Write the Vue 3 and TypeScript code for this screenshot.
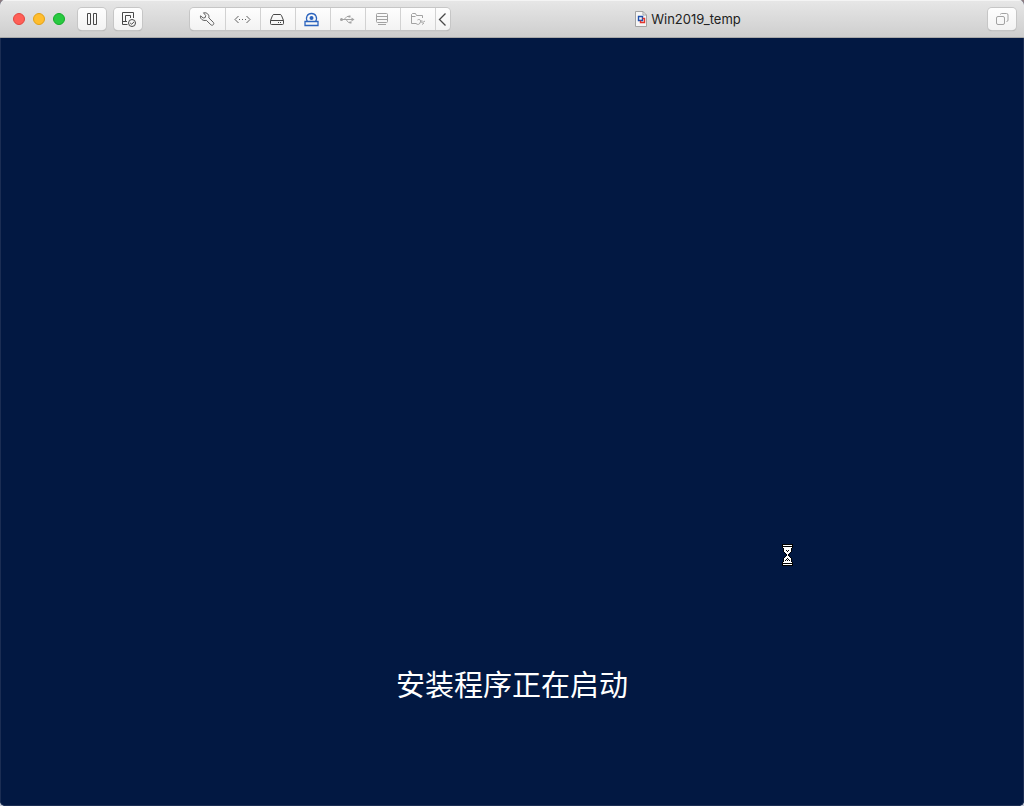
<script setup lang="ts">
import { ref } from 'vue'

type Device = { id: string; label: string; tone: 'dark' | 'mid' | 'blue' | 'dim' }

const devices: Device[] = [
  { id: 'settings', label: '设置', tone: 'mid' },
  { id: 'network', label: '网络适配器', tone: 'mid' },
  { id: 'disk', label: '硬盘', tone: 'dark' },
  { id: 'cd', label: 'CD/DVD', tone: 'blue' },
  { id: 'usb', label: 'USB', tone: 'dim' },
  { id: 'printer', label: '打印机', tone: 'dim' },
  { id: 'share', label: '共享文件夹', tone: 'dim' },
]

const title = ref('Win2019_temp')
const message = ref('安装程序正在启动')
</script>

<template>
  <div class="window">
    <header class="titlebar">
      <div class="lights">
        <button class="light close" aria-label="关闭"></button>
        <button class="light minimize" aria-label="最小化"></button>
        <button class="light zoom" aria-label="缩放"></button>
      </div>

      <button class="tool dark" aria-label="暂停">
        <svg width="28" height="23" viewBox="0 0 28 23">
          <path d="M9.5 5.5h3v11h-3zM15.5 5.5h3v11h-3z" />
        </svg>
      </button>
      <button class="tool dark" aria-label="快照">
        <svg width="28" height="23" viewBox="0 0 28 23">
          <path d="M19.5 10V4.5h-11v12h5M16.500 10V7.500h-5v6M8.500 13.500h4.500" />
          <circle cx="18" cy="15" r="3.500" />
          <path d="M16.200 15l1.500 1.200 2.300-2.300" />
        </svg>
      </button>

      <nav class="devices">
        <button v-for="d in devices" :key="d.id" class="device" :class="d.tone" :aria-label="d.label">
          <svg width="35" height="23" viewBox="0 0 35 23">
            <path
              v-if="d.id === 'settings'"
              d="M13.500 4.800C17 4.200 19.600 6.800 18.800 9.900L23.300 14.300C24.800 16 22.600 18.200 20.900 16.800L16.300 12.300C13 13.200 9.800 10.800 10.500 7.800L13.200 10 15.200 9.600 15.700 7.500Z"
            />
            <g v-else-if="d.id === 'network'">
              <path d="M13.500 8L10 11.500l3.500 3.500M21.500 8l3.500 3.500-3.500 3.500" />
              <path class="fill" d="M14 11h1v1h-1zM17 11h1v1h-1zM20 11h1v1h-1z" />
            </g>
            <g v-else-if="d.id === 'disk'">
              <path d="M10.500 12.500L12.500 7.500Q12.900 6.500 14 6.500h6q1.100 0 1.500 1l2 5v3q0 1-1 1h-11q-1 0-1-1zM10.500 12.500h13" />
              <path class="fill" d="M18 14h1v1h-1zM20 14h1v1h-1z" />
            </g>
            <g v-else-if="d.id === 'cd'">
              <path
                class="medium"
                d="M12.500 13.500C10 9.500 12.500 5.500 16.500 5.500S23 9.500 20.500 13.500M10 13.500h13v4h-13z"
              />
              <circle class="fill" cx="16.500" cy="10" r="2" />
            </g>
            <g v-else-if="d.id === 'usb'">
              <path d="M12 11.500h10M14 11.500l3-3h2M16 11.500l2.500 3h1.500" />
              <path class="fill" d="M21.500 9.500v4l3-2zM18.500 7.500h2v2h-2zM19.500 13.500h2v2h-2z" />
              <circle class="fill" cx="11.500" cy="11.500" r="1.500" />
            </g>
            <path
              v-else-if="d.id === 'printer'"
              d="M12.500 5.500h9q1 0 1 1v7q0 1-1 1h-9q-1 0-1-1v-7q0-1 1-1zM11.500 8.500h11M11.500 11.500h11M13 16.500h8"
            />
            <g v-else>
              <path d="M16 15.500h-4.500v-9l1-1h3l1 2h6v2.500M11.500 8.500h4" />
              <path d="M16 15.500c1.500 1.500 3.500 1 4-0.500s1-2.500 2.500-2M17.500 12c1.500-1 3-0.500 3 1s2 2 4.500 0M22 16.500l2-1.500" />
            </g>
          </svg>
        </button>
        <button class="device dark" aria-label="折叠">
          <svg width="15" height="23" viewBox="0 0 15 23">
            <path class="medium" d="M10.500 5.500l-6 6 6 6" />
          </svg>
        </button>
      </nav>

      <h1 class="title">
        <svg width="12" height="16" viewBox="0 0 12 16">
          <path d="M0.500 0.500h7.500l3.500 3.500v11.500H0.500z" fill="#f6f6f6" stroke="#a3a3a3" />
          <path d="M8 0.500V4h3.500" fill="none" stroke="#a3a3a3" />
          <path d="M3.500 5.500h4v4h-4z" fill="none" stroke="#1c4fae" stroke-width="1.400" />
          <path d="M5.500 9.500v2h4v-4h-2" fill="none" stroke="#e2342c" stroke-width="1.400" />
        </svg>
        <span>{{ title }}</span>
      </h1>

      <button class="tool dim" aria-label="窗口">
        <svg width="28" height="23" viewBox="0 0 28 23">
          <path d="M12.500 6.500q0-1 1-1h5q1.500 0 1.500 1.500v5q0 1.500-1.500 1.500" />
          <rect x="8.500" y="8.500" width="8" height="8" rx="1.500" />
        </svg>
      </button>
    </header>

    <main class="screen">
      <p class="message">{{ message }}</p>
      <svg class="pointer" width="11" height="22" viewBox="0 0 11 22" shape-rendering="crispEdges">
        <path fill="#000" d="M0 0h11v4h-1v4H9v1H8v1H7v2h1v1h1v1h1v4h1v4H0v-4h1v-4h1v-1h1v-1h1v-2H3V9H2V8H1V4H0z" />
        <path
          fill="#fff"
          d="M1 1h9v1H1zM1 3h9v1H9v4H8v1H7v1H6v2h1v1h1v1h1v4h1v1H1v-1h1v-4h1v-1h1v-1h1v-2H4V9H3V8H2V4H1zM1 20h9v1H1z"
        />
        <path
          fill="#000"
          d="M4 6h1v1H4zM6 6h1v1H6zM5 7h1v1H5zM5 14h1v1H5zM4 15h1v1H4zM6 15h1v1H6zM3 16h1v1H3zM5 16h1v1H5zM7 16h1v1H7z"
        />
      </svg>
    </main>
  </div>
</template>

<style>
body {
  margin: 0;
  background: linear-gradient(#8d7c80, #c4c9d4);
}
</style>

<style scoped>
.window {
  display: flex;
  flex-direction: column;
  min-height: 100vh;
  border-radius: 5px;
  overflow: hidden;
  background: #021842;
}

.titlebar {
  display: flex;
  align-items: center;
  box-sizing: border-box;
  height: 38px;
  padding: 0 8px 0 13px;
  background: linear-gradient(#e7e7e7, #cecece);
  border-bottom: 1px solid #a9a9a9;
  box-shadow: inset 0 1px #f4f4f4;
}

button {
  padding: 0;
  border: 0;
  font: inherit;
}

.lights {
  display: flex;
  gap: 8px;
  margin-right: 13px;
}

.light {
  box-sizing: border-box;
  width: 12px;
  height: 12px;
  border-radius: 50%;
}

.close {
  background: #ff5f57;
  border: 1px solid #e2463f;
}

.minimize {
  background: #ffbd2e;
  border: 1px solid #e1a116;
}

.zoom {
  background: #28c940;
  border: 1px solid #12ac28;
}

.tool,
.devices {
  display: flex;
  height: 22px;
  border-radius: 4px;
  background: linear-gradient(#fefefe, #f3f3f3);
  box-shadow: 0 0 0 1px #c6c6c6, 0 1px 1px #9f9f9f;
}

.tool {
  flex: none;
  width: 28px;
}

.tool + .tool {
  margin-left: 8px;
}

.devices {
  flex: none;
  margin-left: 48px;
}

.device {
  display: flex;
  background: none;
}

.device + .device {
  box-shadow: inset 1px 0 #d2d2d2;
}

svg {
  display: block;
  flex: none;
}

.tool svg,
.device svg {
  fill: none;
  stroke: currentColor;
}

.device .fill {
  fill: currentColor;
  stroke: none;
}

.medium {
  stroke-width: 1.3;
}

.dark {
  color: #484848;
}

.mid {
  color: #606060;
}

.blue {
  color: #2b63bd;
}

.dim {
  color: #a2a2a2;
}

.title {
  display: flex;
  flex: 1;
  align-items: center;
  justify-content: center;
  gap: 4px;
  margin: 0;
  padding-right: 62px;
  color: #222;
  font: 400 13px/16px Inter, "Liberation Sans", sans-serif;
}

.screen {
  position: relative;
  display: flex;
  flex: 1;
  align-items: flex-end;
  justify-content: center;
  border: 1px solid #1b2d53;
  border-top: 0;
  border-radius: 0 0 5px 5px;
}

.message {
  margin: 0 0 102px;
  color: #fff;
  font: 400 29px/40px "Noto Sans CJK SC", sans-serif;
}

.pointer {
  position: absolute;
  top: 506px;
  left: 781px;
}
</style>
